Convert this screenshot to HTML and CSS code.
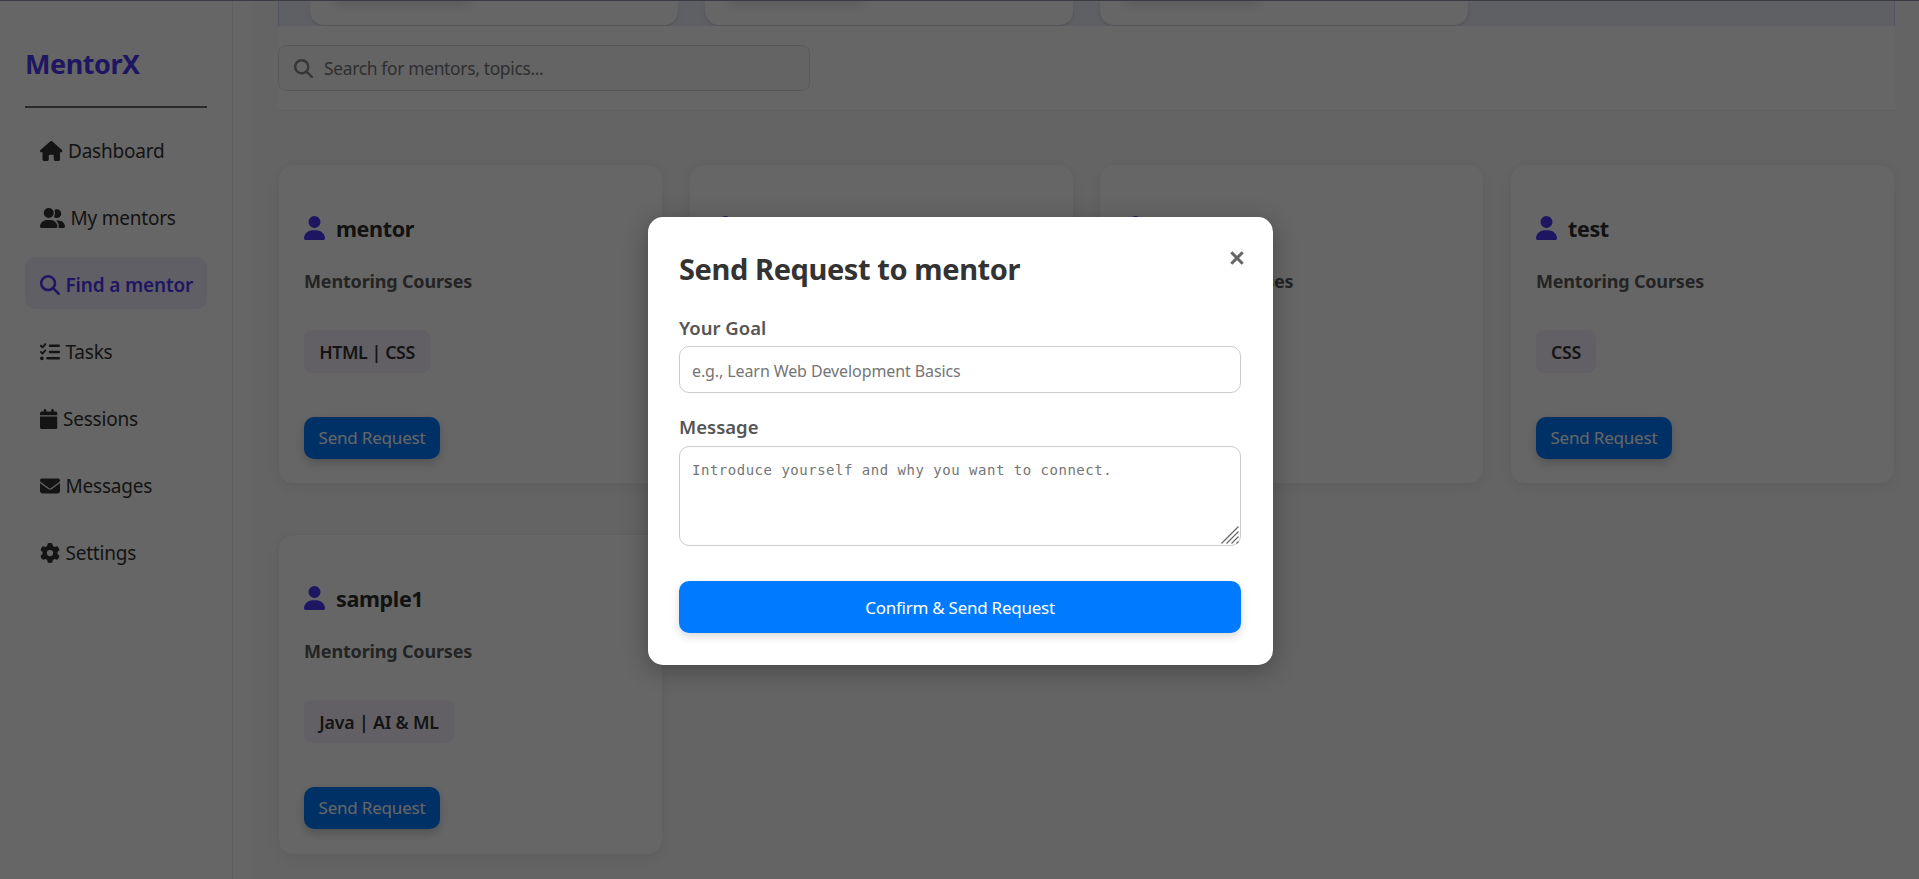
FILE: index.html
```html
<!DOCTYPE html>
<html lang="en">
<head>
<meta charset="utf-8">
<title>MentorX</title>
<link rel="stylesheet" href="styles.css">
</head>
<body>
<svg class="sprite" xmlns="http://www.w3.org/2000/svg">
  <symbol id="house" viewBox="0 0 576 512"><path d="M575.8 255.5c0 18-15 32.1-32 32.1l-32 0 .7 160.2c0 2.7-.2 5.4-.5 8.1l0 16.2c0 22.1-17.9 40-40 40l-16 0c-1.1 0-2.2 0-3.3-.1c-1.4 .1-2.8 .1-4.2 .1L416 512l-24 0c-22.1 0-40-17.9-40-40l0-24 0-64c0-17.7-14.3-32-32-32l-64 0c-17.7 0-32 14.3-32 32l0 64 0 24c0 22.1-17.9 40-40 40l-24 0-31.9 0c-1.5 0-3-.1-4.5-.2c-1.2 .1-2.4 .2-3.6 .2l-16 0c-22.1 0-40-17.9-40-40l0-112c0-.9 0-1.9 .1-2.8l0-69.7-32 0c-18 0-32-14-32-32.1c0-9 3-17 10-24L266.4 8c7-7 15-8 22-8s15 2 21 7L564.8 231.5c8 7 12 15 11 24z"/></symbol>
  <symbol id="user" viewBox="0 0 448 512"><path d="M224 256A128 128 0 1 0 224 0a128 128 0 1 0 0 256zm-45.7 48C79.8 304 0 383.8 0 482.3C0 498.7 13.3 512 29.7 512l388.6 0c16.4 0 29.7-13.3 29.7-29.7C448 383.8 368.2 304 269.7 304l-91.4 0z"/></symbol>
  <symbol id="users" viewBox="0 0 640 512"><path d="M96 128a128 128 0 1 1 256 0A128 128 0 1 1 96 128zM0 482.3C0 383.8 79.8 304 178.3 304l91.4 0C368.2 304 448 383.8 448 482.3c0 16.4-13.3 29.7-29.7 29.7L29.7 512C13.3 512 0 498.7 0 482.3zM609.3 512l-137.8 0c5.4-9.4 8.6-20.3 8.6-32l0-8c0-60.7-27.1-115.2-69.8-151.8c2.4-.1 4.7-.2 7.1-.2l61.4 0C567.8 320 640 392.2 640 481.3c0 17-13.8 30.7-30.7 30.7zM432 256c-31 0-59-12.6-79.3-32.9C372.4 196.5 384 163.6 384 128c0-26.8-6.6-52.1-18.3-74.3C384.3 40.1 407.2 32 432 32c61.9 0 112 50.1 112 112s-50.1 112-112 112z"/></symbol>
  <symbol id="search" viewBox="0 0 512 512"><path d="M416 208c0 45.9-14.9 88.3-40 122.7L502.6 457.4c12.5 12.5 12.5 32.8 0 45.3s-32.8 12.5-45.3 0L330.7 376c-34.4 25.2-76.8 40-122.7 40C93.1 416 0 322.9 0 208S93.1 0 208 0S416 93.1 416 208zM208 352a144 144 0 1 0 0-288 144 144 0 1 0 0 288z"/></symbol>
  <symbol id="tasks" viewBox="0 0 512 512"><path d="M152.1 38.2c9.9 8.9 10.7 24 1.8 33.9l-72 80c-4.4 4.9-10.6 7.8-17.2 7.9s-12.9-2.4-17.6-7L7 113C-2.3 103.6-2.3 88.4 7 79s24.6-9.4 33.9 0l22.1 22.1 55.1-61.2c8.9-9.9 24-10.7 33.9-1.8zm0 160c9.9 8.9 10.7 24 1.8 33.9l-72 80c-4.4 4.9-10.6 7.8-17.2 7.9s-12.9-2.4-17.6-7L7 273c-9.4-9.4-9.4-24.6 0-33.9s24.6-9.4 33.9 0l22.1 22.1 55.1-61.2c8.9-9.9 24-10.7 33.9-1.8zM224 96c0-17.7 14.3-32 32-32l224 0c17.7 0 32 14.3 32 32s-14.3 32-32 32l-224 0c-17.7 0-32-14.3-32-32zm0 160c0-17.7 14.3-32 32-32l224 0c17.7 0 32 14.3 32 32s-14.3 32-32 32l-224 0c-17.7 0-32-14.3-32-32zM160 416c0-17.7 14.3-32 32-32l288 0c17.7 0 32 14.3 32 32s-14.3 32-32 32l-288 0c-17.7 0-32-14.3-32-32zM48 368a48 48 0 1 1 0 96 48 48 0 1 1 0-96z"/></symbol>
  <symbol id="calendar" viewBox="0 0 448 512"><path d="M96 32l0 32L48 64C21.5 64 0 85.5 0 112l0 48 448 0 0-48c0-26.5-21.5-48-48-48l-48 0 0-32c0-17.7-14.3-32-32-32s-32 14.3-32 32l0 32L160 64l0-32c0-17.7-14.3-32-32-32S96 14.3 96 32zM448 192L0 192 0 464c0 26.5 21.5 48 48 48l352 0c26.5 0 48-21.5 48-48l0-272z"/></symbol>
  <symbol id="envelope" viewBox="0 0 512 512"><path d="M48 64C21.5 64 0 85.5 0 112c0 15.1 7.1 29.3 19.2 38.4L236.8 313.6c11.4 8.5 27 8.5 38.4 0L492.8 150.4c12.1-9.1 19.2-23.3 19.2-38.4c0-26.5-21.5-48-48-48L48 64zM0 176L0 384c0 35.3 28.7 64 64 64l384 0c35.3 0 64-28.7 64-64l0-208L294.4 339.2c-22.8 17.1-54 17.1-76.8 0L0 176z"/></symbol>
  <symbol id="gear" viewBox="0 0 512 512"><path d="M495.9 166.6c3.2 8.7 .5 18.4-6.4 24.6l-43.3 39.4c1.1 8.3 1.7 16.8 1.7 25.4s-.6 17.1-1.7 25.4l43.3 39.4c6.9 6.2 9.6 15.9 6.4 24.6c-4.4 11.9-9.7 23.3-15.8 34.3l-4.7 8.1c-6.6 11-14 21.4-22.1 31.2c-5.9 7.2-15.7 9.6-24.5 6.8l-55.7-17.7c-13.4 10.3-28.2 18.9-44 25.4l-12.5 57.1c-2 9.1-9 16.3-18.2 17.8c-13.8 2.3-28 3.5-42.5 3.5s-28.7-1.2-42.5-3.5c-9.2-1.5-16.2-8.7-18.2-17.8l-12.5-57.1c-15.8-6.5-30.6-15.1-44-25.4L83.1 425.9c-8.8 2.8-18.6 .3-24.5-6.8c-8.1-9.8-15.5-20.2-22.1-31.2l-4.7-8.1c-6.1-11-11.4-22.4-15.8-34.3c-3.2-8.7-.5-18.4 6.4-24.6l43.3-39.4C64.6 273.1 64 264.6 64 256s.6-17.1 1.7-25.4L22.4 191.2c-6.9-6.2-9.6-15.9-6.4-24.6c4.4-11.9 9.7-23.3 15.8-34.3l4.7-8.1c6.6-11 14-21.4 22.1-31.2c5.9-7.2 15.7-9.6 24.5-6.8l55.7 17.7c13.4-10.3 28.2-18.9 44-25.4l12.5-57.1c2-9.1 9-16.3 18.2-17.8C227.3 1.2 241.5 0 256 0s28.7 1.2 42.5 3.5c9.2 1.5 16.2 8.7 18.2 17.8l12.5 57.1c15.8 6.5 30.6 15.1 44 25.4l55.7-17.7c8.8-2.8 18.6-.3 24.5 6.8c8.1 9.8 15.5 20.2 22.1 31.2l4.7 8.1c6.1 11 11.4 22.4 15.8 34.3zM256 336a80 80 0 1 0 0-160 80 80 0 1 0 0 160z"/></symbol>
</svg>

<div class="app">
  <aside class="sidebar">
    <div class="logo">MentorX</div>
    <nav class="nav">
      <a class="nav-item"><svg class="icon icon-house"><use href="#house"/></svg><span>Dashboard</span></a>
      <a class="nav-item"><svg class="icon icon-users"><use href="#users"/></svg><span>My mentors</span></a>
      <a class="nav-item active"><svg class="icon"><use href="#search"/></svg><span>Find a mentor</span></a>
      <a class="nav-item"><svg class="icon"><use href="#tasks"/></svg><span>Tasks</span></a>
      <a class="nav-item"><svg class="icon icon-calendar"><use href="#calendar"/></svg><span>Sessions</span></a>
      <a class="nav-item"><svg class="icon"><use href="#envelope"/></svg><span>Messages</span></a>
      <a class="nav-item"><svg class="icon"><use href="#gear"/></svg><span>Settings</span></a>
    </nav>
  </aside>

  <main class="main">
    <section class="banner">
      <div class="banner-card"><div class="banner-button"></div></div>
      <div class="banner-card"><div class="banner-button"></div></div>
      <div class="banner-card"><div class="banner-button"></div></div>
    </section>

    <header class="toolbar">
      <div class="search"><svg class="search-icon"><use href="#search"/></svg><span>Search for mentors, topics...</span></div>
    </header>

    <section class="grid">
      <article class="card">
        <h3 class="name"><svg class="avatar"><use href="#user"/></svg><span>mentor</span></h3>
        <p class="subtitle">Mentoring Courses</p>
        <div class="tag tag-html">HTML | CSS</div>
        <button class="send">Send Request</button>
      </article>
      <article class="card">
        <h3 class="name"><svg class="avatar"><use href="#user"/></svg></h3>
      </article>
      <article class="card">
        <h3 class="name"><svg class="avatar"><use href="#user"/></svg></h3>
        <p class="subtitle">Mentoring Courses</p>
      </article>
      <article class="card">
        <h3 class="name"><svg class="avatar"><use href="#user"/></svg><span>test</span></h3>
        <p class="subtitle">Mentoring Courses</p>
        <div class="tag tag-css">CSS</div>
        <button class="send">Send Request</button>
      </article>
      <article class="card">
        <h3 class="name"><svg class="avatar"><use href="#user"/></svg><span>sample1</span></h3>
        <p class="subtitle">Mentoring Courses</p>
        <div class="tag tag-java">Java | AI &amp; ML</div>
        <button class="send">Send Request</button>
      </article>
    </section>
  </main>
</div>

<div class="overlay">
  <div class="modal">
    <div class="modal-head">
      <h2 class="modal-title">Send Request to mentor</h2>
      <svg class="close" viewBox="0 0 16 16"><path d="M2.3 2.3L13.7 13.7M13.7 2.3L2.3 13.7"/></svg>
    </div>
    <div class="label">Your Goal</div>
    <div class="input">e.g., Learn Web Development Basics</div>
    <div class="label label-message">Message</div>
    <div class="textarea"><span>Introduce yourself and why you want to connect.</span>
      <svg class="grip" viewBox="0 0 18 18"><path d="M.5 17.5L17.5 .5M5.5 17.5L17.5 5.5M10.5 17.5L17.5 10.5M15.5 17.5L17.5 15.5"/></svg>
    </div>
    <button class="confirm">Confirm &amp; Send Request</button>
  </div>
</div>
<div class="topline"></div>
</body>
</html>
```
FILE: styles.css
```css
* { box-sizing: border-box; }
body {
  margin: 0;
  height: 879px;
  overflow: hidden;
  font-family: "Noto Sans", "Open Sans", sans-serif;
  background: #fff;
  color: #333;
}
h2, h3, p { margin: 0; }
button { font-family: inherit; border: 0; padding: 0; }
span { white-space: nowrap; }
.sprite { display: none; }
.app { display: flex; height: 879px; }

/* Sidebar */
.sidebar {
  width: 233px;
  flex: none;
  padding: 32px 25px 0;
  border-right: 1px solid #ebebeb;
}
.logo {
  height: 76px;
  padding-top: 9px;
  border-bottom: 2px solid #666;
  font-size: 27px;
  line-height: 46px;
  font-weight: 700;
  letter-spacing: -0.45px;
  color: #4f39f6;
}
.nav { display: flex; flex-direction: column; gap: 15px; padding-top: 15px; }
.nav-item {
  display: flex;
  align-items: center;
  gap: 5.5px;
  height: 52px;
  padding: 4px 0 0 15px;
  border-radius: 10px;
  font-size: 19px;
  letter-spacing: -0.22px;
}
.nav-item.active { background: #efedff; color: #4f39f6; font-weight: 600; letter-spacing: -0.17px; }
.icon { width: 20px; height: 20px; flex: none; fill: currentColor; }
.icon-house { width: 22.5px; }
.icon-users { width: 25px; }
.icon-calendar { width: 17.5px; }

/* Main column */
.main {
  flex: 1;
  min-width: 0;
  margin-left: 19px;
  padding: 0 24px 0 26px;
  background: #f9f9f9;
}
.banner {
  display: flex;
  gap: 27px;
  height: 26px;
  padding-left: 31px;
  overflow: hidden;
  border: solid #d3cdf5;
  border-width: 0 1px;
  background: #eef0fb;
}
.banner-card {
  width: 368px;
  height: 25px;
  padding-left: 26px;
  border-radius: 0 0 14px 14px;
  background: #fff;
  box-shadow: 0 1px 2px rgba(0,0,0,.1), 0 4px 10px rgba(0,0,0,.06);
}
.banner-button { width: 132px; height: 1px; box-shadow: 0 0 12px 1px rgba(0,0,0,.4); }
.toolbar { height: 85px; padding-top: 19px; border-bottom: 1px solid #ececec; background: #fff; }
.search {
  display: flex;
  align-items: center;
  width: 532px;
  height: 46px;
  padding-left: 15px;
  border: 1px solid #dcdcdc;
  border-radius: 8px;
  background: #fafafa;
  color: #757575;
  font-size: 17.4px;
  letter-spacing: -0.32px;
}
.search-icon { width: 19px; height: 19px; margin-right: 11px; fill: #888; }

.grid {
  display: grid;
  grid-template-columns: repeat(4, 1fr);
  grid-auto-rows: 320.4px;
  gap: 50px 25.6px;
  padding-top: 53px;
}
.card {
  display: flex;
  flex-direction: column;
  align-items: flex-start;
  padding: 45px 25px 0;
  border: 1px solid #f0f0f0;
  border-radius: 15px;
  background: #fff;
  box-shadow: 0 4px 12px rgba(0,0,0,.05);
}
.name { display: flex; align-items: center; gap: 11px; height: 39px; font-size: 21.5px; line-height: 37px; color: #2d2d2d; letter-spacing: -0.35px; }
.name span { margin-bottom: 2px; }
.avatar { width: 21px; height: 24px; margin-bottom: 4px; fill: #4f39f6; flex: none; }
.subtitle { height: 30px; margin-top: 17px; font-size: 18px; line-height: 30px; font-weight: 700; letter-spacing: -0.17px; color: #5a5a5a; }
.tag {
  height: 43px;
  margin-top: 34px;
  border-radius: 8px;
  background: #f4f1fd;
  font-size: 17.8px;
  line-height: 45px;
  font-weight: 600;
  text-align: center;
  letter-spacing: -0.4px;
  white-space: nowrap;
}
.tag-html { width: 126px; }
.tag-css { width: 60px; }
.tag-java { width: 150px; letter-spacing: -0.2px; }
.send {
  width: 136px;
  height: 42px;
  margin-top: 44px;
  padding-bottom: 1px;
  border-radius: 10px;
  background: #007bff;
  box-shadow: 0 4px 10px rgba(0,0,0,.2);
  color: #fff;
  font-size: 17px;
  letter-spacing: -0.2px;
}

/* Dialog */
.overlay {
  position: absolute;
  inset: 0;
  display: flex;
  justify-content: center;
  padding: 217px 0 0 2px;
  background: rgba(0,0,0,.6);
}
.modal {
  display: flex;
  flex-direction: column;
  width: 625px;
  height: 448px;
  padding: 30px 32px 0 31px;
  border-radius: 15px;
  background: #fff;
  box-shadow: 0 5px 25px rgba(0,0,0,.3);
}
.modal-head { display: flex; justify-content: space-between; height: 64px; }
.modal-title { font-size: 29px; line-height: 43px; letter-spacing: -0.4px; white-space: nowrap; }
.close { width: 16px; height: 16px; margin: 3px -4px 0 0; stroke: #666; stroke-width: 3; fill: none; }
.label { height: 35px; font-size: 18.5px; line-height: 33px; font-weight: 600; letter-spacing: 0; color: #555; }
.input {
  height: 47px;
  padding-left: 12px;
  border: 1px solid #ccc;
  border-radius: 10px;
  color: #757575;
  font-size: 16px;
  line-height: 48px;
  letter-spacing: -0.1px;
}
.label-message { height: 53px; padding-top: 17px; }
.textarea {
  position: relative;
  height: 100px;
  padding: 13px 12px;
  border: 1px solid #ccc;
  border-radius: 10px;
  color: #757575;
  font-family: "DejaVu Sans Mono", monospace;
  font-size: 14px;
  line-height: 20px;
  letter-spacing: 0.51px;
}
.grip { position: absolute; right: 1px; bottom: 1px; width: 18px; height: 18px; stroke: #666; stroke-width: 1.2; fill: none; }
.confirm {
  height: 52px;
  margin-top: 35px;
  border-radius: 10px;
  background: #007bff;
  box-shadow: 0 4px 10px rgba(0,0,0,.15);
  color: #fff;
  font-size: 17px;
  letter-spacing: -0.26px;
}
.topline { position: absolute; left: 0; right: 0; top: 0; height: 1px; background: #3c3a42; }
```
